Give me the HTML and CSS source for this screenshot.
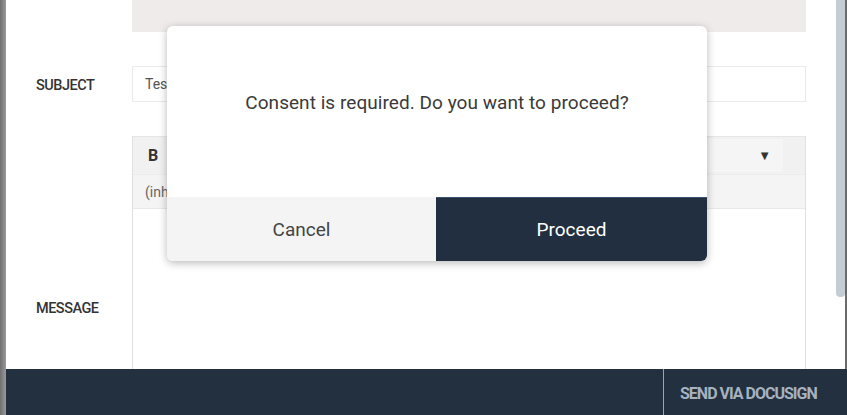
FILE: index.html
```html
<!DOCTYPE html>
<html>
<head>
<meta charset="utf-8">
<link rel="stylesheet" href="styles.css">
</head>
<body>
<div class="frame">
  <div class="edge"></div>
  <div class="window">
    <div class="scroller">
      <div class="content">
        <div class="form">
          <div class="label"></div>
          <div class="topbox"></div>

          <div class="label subject-label">SUBJECT</div>
          <div class="input">Test</div>

          <div class="label message-label">MESSAGE</div>
          <div class="editor">
            <div class="toolbar">
              <span class="bold-btn">B</span>
              <div class="dropdown">
                <span class="dd-text">Paragraph Format</span>
                <span class="dd-arrow">&#9660;</span>
              </div>
            </div>
            <div class="toolbar2">(inherited font)</div>
            <div class="editor-body"></div>
          </div>
        </div>
      </div>
      <div class="scrollbar">
        <div class="thumb"></div>
      </div>
      <div class="rightedge"></div>
    </div>
    <div class="footer">
      <div class="footer-fill"></div>
      <div class="send">SEND VIA DOCUSIGN</div>
    </div>
  </div>
</div>

<div class="modal">
  <div class="modal-body">
    <p class="modal-text">Consent is required. Do you want to proceed?</p>
  </div>
  <div class="modal-actions">
    <button class="btn btn-cancel">Cancel</button>
    <button class="btn btn-proceed">Proceed</button>
  </div>
</div>
</body>
</html>
```

FILE: styles.css
```css
* { box-sizing: border-box; }
html, body {
  margin: 0;
  padding: 0;
  width: 847px;
  height: 415px;
  overflow: hidden;
  background: #ffffff;
  font-family: Roboto, "Liberation Sans", Arial, sans-serif;
}
.frame {
  display: flex;
  width: 847px;
  height: 415px;
}
.edge {
  width: 6px;
  flex: none;
  background: linear-gradient(to right, #6f6f6f, #9a9a9a);
}
.window {
  flex: 1;
  display: flex;
  flex-direction: column;
  min-width: 0;
}
.scroller {
  height: 369px;
  display: flex;
  overflow: hidden;
}
.content {
  width: 830px;
  flex: none;
  overflow: hidden;
  background: #ffffff;
}
.form {
  display: grid;
  grid-template-columns: 126px 674px;
  grid-template-rows: 32px 36px auto;
  row-gap: 34px;
}
.label {
  padding-left: 30px;
  font-size: 14.5px;
  font-weight: 500;
  color: #333333;
  letter-spacing: -0.5px;
}
.subject-label {
  display: flex;
  align-items: center;
  padding-top: 2px;
}
.message-label {
  padding-top: 164px;
}
.topbox {
  background: #efebea;
}
.input {
  border: 1px solid #ebebeb;
  display: flex;
  align-items: center;
  padding-left: 12px;
  font-size: 14px;
  color: #555555;
}
.editor {
  height: 342px;
  border-left: 1px solid #e0e0e0;
  border-right: 1px solid #e0e0e0;
  display: flex;
  flex-direction: column;
}
.toolbar {
  height: 38px;
  background: #f1f1f1;
  border-top: 1px solid #e6e6e6;
  display: flex;
  align-items: center;
  justify-content: space-between;
  padding-left: 15px;
  padding-right: 22px;
}
.bold-btn {
  font-weight: 700;
  font-size: 16px;
  color: #333333;
}
.dropdown {
  width: 180px;
  height: 33px;
  background: #f5f5f5;
  display: flex;
  align-items: center;
  justify-content: flex-end;
  padding-right: 12px;
  gap: 56px;
  font-size: 14px;
  color: #555555;
}
.dd-arrow {
  font-size: 13px;
  color: #333333;
}
.toolbar2 {
  height: 35px;
  background: #f4f4f4;
  border-top: 1px solid #ececec;
  border-bottom: 1px solid #e8e8e8;
  display: flex;
  align-items: center;
  padding-left: 12px;
  font-size: 14px;
  color: #666666;
}
.editor-body {
  flex: 1;
  background: #ffffff;
}
.scrollbar {
  width: 9px;
  flex: none;
  background: #ffffff;
}
.thumb {
  height: 297px;
  background: #c3cdd3;
  border-radius: 0 0 4px 4px;
}
.rightedge {
  width: 2px;
  flex: none;
  background: #6a6a6a;
}
.footer {
  height: 46px;
  background: #22303f;
  display: flex;
}
.footer-fill {
  flex: 1;
}
.send {
  width: 184px;
  border-left: 1px solid #9aa6b2;
  display: flex;
  align-items: center;
  padding-left: 16px;
  padding-top: 2px;
  font-size: 16px;
  font-weight: 700;
  letter-spacing: -1px;
  color: #a7b2be;
}
.modal {
  position: absolute;
  left: 167px;
  top: 26px;
  width: 540px;
  height: 235px;
  border-radius: 6px;
  background: #ffffff;
  box-shadow: 0 2px 9px rgba(0, 0, 0, 0.28);
  overflow: hidden;
  display: flex;
  flex-direction: column;
}
.modal-body {
  height: 171px;
  padding-top: 65px;
}
.modal-text {
  margin: 0;
  text-align: center;
  font-size: 19px;
  line-height: 24px;
  letter-spacing: 0.05px;
  color: #3a3a3a;
}
.modal-actions {
  flex: 1;
  display: flex;
}
.btn {
  border: none;
  margin: 0;
  font-family: Roboto, "Liberation Sans", Arial, sans-serif;
  font-size: 19px;
  cursor: pointer;
}
.btn-cancel {
  width: 269px;
  background: #f4f4f4;
  color: #444444;
}
.btn-proceed {
  flex: 1;
  background: #212f41;
  color: #ffffff;
  font-weight: 400;
  border-top: 1px solid #3b4f6e;
}
```
